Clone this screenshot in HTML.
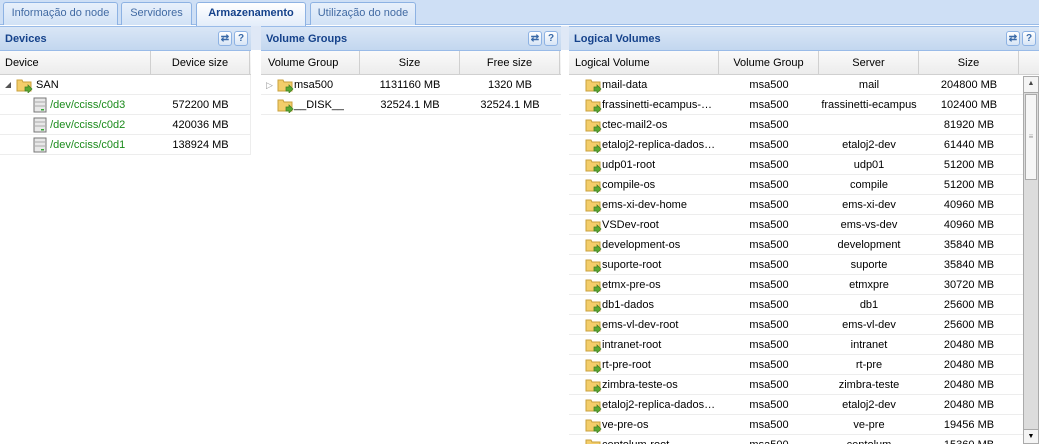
<!DOCTYPE html><html><head><style>
*{box-sizing:border-box;margin:0;padding:0}
body{width:1039px;height:444px;overflow:hidden;background:#fff;font-family:"Liberation Sans",sans-serif;font-size:11px;color:#000;position:relative}
.tabbar{position:absolute;left:0;top:0;width:1039px;height:25px;background:#cedff5;border-bottom:1px solid #99bbe8}
.tab{position:absolute;top:2px;height:23px;border:1px solid #8db2e3;border-bottom:none;border-radius:3px 3px 0 0;background:linear-gradient(#e8f0fb,#d2e2f6);color:#416aa3;font-size:11px;line-height:21px;text-align:center}
.tab.act{background:linear-gradient(#fff,#e3edfa);color:#15428b;font-weight:bold;height:24px}
.gap{position:absolute;top:26px;height:24px;background:#dfe8f6}
.panel{position:absolute;top:26px;height:418px;background:#fff;overflow:hidden}
.ph{height:25px;background:linear-gradient(#dae6f6,#c3d7ef);border-top:1px solid #99bbe8;border-bottom:1px solid #99bbe8;color:#15428b;font-weight:bold;font-size:11px;line-height:24px;padding-left:5px;position:relative}
.btns{position:absolute;right:3px;top:4px;line-height:0}
.btns span{float:left;display:block;width:14px;height:15px;border:1px solid #8db2e3;border-radius:3px;background:linear-gradient(#fff,#d7e5f6);margin-left:2px;font-size:10px;line-height:13px;text-align:center;color:#3a6aa8;font-weight:bold}
.ch{height:24px;background:linear-gradient(#fafafa,#ececec);border-bottom:1px solid #d0d0d0;position:relative}
.ch div{position:absolute;top:0;height:23px;line-height:24px;border-right:1px solid #d0d0d0;font-size:11px}
.row{height:20px;border-bottom:1px solid #ededed;position:relative}
.row div{position:absolute;top:0;line-height:20px;white-space:nowrap;overflow:hidden}
.c{text-align:center}
.g{color:#1a8a1a}
svg{vertical-align:middle}
</style></head><body>
<div class="tabbar">
<div class="tab" style="left:3px;width:115px">Informação do node</div>
<div class="tab" style="left:121px;width:71px">Servidores</div>
<div class="tab act" style="left:196px;width:110px">Armazenamento</div>
<div class="tab" style="left:310px;width:106px">Utilização do node</div>
</div>
<div class="gap" style="left:251px;width:10px"></div>
<div class="gap" style="left:561px;width:8px"></div>

<div class="panel" style="left:0;width:251px">
<div class="ph">Devices<div class="btns"><span>⇄</span><span>?</span></div></div>
<div class="ch"><div style="left:0;width:151px;padding-left:5px">Device</div><div style="left:151px;width:99px;text-align:center">Device size</div></div>
<div class="row" style="border-right:1px solid #ededed"><div style="left:5px;font-size:8px;color:#555">◢</div><div style="left:16px"><svg width="17" height="16"><path d="M1 3h5l1 2h8v9H1z" fill="#f3cd6a" stroke="#c9a13c"/><path d="M9 10h3V8l4 4-4 4v-2H9z" fill="#5aa832" stroke="#3d7f20" stroke-width=".7"/></svg> SAN</div></div>
<div class="row" style="border-right:1px solid #ededed"><div style="left:33px"><svg width="14" height="16"><rect x="1" y="1" width="12" height="14" fill="#e8e8e8" stroke="#777"/><path d="M2 5h10M2 9h10" stroke="#aaa"/><rect x="8" y="12" width="3" height="1.5" fill="#3a3"/></svg> <span class="g">/dev/cciss/c0d3</span></div><div class="c" style="left:151px;width:99px">572200 MB</div></div>
<div class="row" style="border-right:1px solid #ededed"><div style="left:33px"><svg width="14" height="16"><rect x="1" y="1" width="12" height="14" fill="#e8e8e8" stroke="#777"/><path d="M2 5h10M2 9h10" stroke="#aaa"/><rect x="8" y="12" width="3" height="1.5" fill="#3a3"/></svg> <span class="g">/dev/cciss/c0d2</span></div><div class="c" style="left:151px;width:99px">420036 MB</div></div>
<div class="row" style="border-right:1px solid #ededed"><div style="left:33px"><svg width="14" height="16"><rect x="1" y="1" width="12" height="14" fill="#e8e8e8" stroke="#777"/><path d="M2 5h10M2 9h10" stroke="#aaa"/><rect x="8" y="12" width="3" height="1.5" fill="#3a3"/></svg> <span class="g">/dev/cciss/c0d1</span></div><div class="c" style="left:151px;width:99px">138924 MB</div></div>
</div>

<div class="panel" style="left:261px;width:300px">
<div class="ph">Volume Groups<div class="btns"><span>⇄</span><span>?</span></div></div>
<div class="ch"><div style="left:0;width:99px;padding-left:7px">Volume Group</div><div style="left:99px;width:100px;text-align:center">Size</div><div style="left:199px;width:100px;text-align:center">Free size</div></div>
<div class="row"><div style="left:5px;color:#999;font-size:9px">▷</div><div style="left:16px"><svg width="17" height="16"><path d="M1 3h5l1 2h8v9H1z" fill="#f3cd6a" stroke="#c9a13c"/><path d="M9 10h3V8l4 4-4 4v-2H9z" fill="#5aa832" stroke="#3d7f20" stroke-width=".7"/></svg>msa500</div><div class="c" style="left:99px;width:100px">1131160 MB</div><div class="c" style="left:199px;width:100px">1320 MB</div></div>
<div class="row"><div style="left:16px"><svg width="17" height="16"><path d="M1 3h5l1 2h8v9H1z" fill="#f3cd6a" stroke="#c9a13c"/><path d="M9 10h3V8l4 4-4 4v-2H9z" fill="#5aa832" stroke="#3d7f20" stroke-width=".7"/></svg>__DISK__</div><div class="c" style="left:99px;width:100px">32524.1 MB</div><div class="c" style="left:199px;width:100px">32524.1 MB</div></div>
</div>

<div class="panel" style="left:569px;width:470px">
<div class="ph">Logical Volumes<div class="btns"><span>⇄</span><span>?</span></div></div>
<div class="ch"><div style="left:0;width:150px;padding-left:6px">Logical Volume</div><div style="left:150px;width:100px;text-align:center">Volume Group</div><div style="left:250px;width:100px;text-align:center">Server</div><div style="left:350px;width:100px;text-align:center">Size</div></div>
<div id="lv"></div>
<div style="position:absolute;left:454px;top:50px;width:16px;height:368px;background:#dcdcdc;border:1px solid #aaa"><div style="height:16px;background:#f4f4f4;border-bottom:1px solid #aaa;font-size:7px;text-align:center;line-height:14px;color:#444">▲</div><div style="margin:1px;height:86px;background:#f6f6f6;border:1px solid #aaa;text-align:center;line-height:84px;color:#999;font-size:8px">≡</div><div style="position:absolute;bottom:0;left:0;width:14px;height:14px;background:#f4f4f4;border-top:1px solid #aaa;font-size:7px;text-align:center;line-height:14px">▼</div></div>
</div>
<script>
var d=[["mail-data","mail","204800"],["frassinetti-ecampus-…","frassinetti-ecampus","102400"],["ctec-mail2-os","","81920"],["etaloj2-replica-dados…","etaloj2-dev","61440"],["udp01-root","udp01","51200"],["compile-os","compile","51200"],["ems-xi-dev-home","ems-xi-dev","40960"],["VSDev-root","ems-vs-dev","40960"],["development-os","development","35840"],["suporte-root","suporte","35840"],["etmx-pre-os","etmxpre","30720"],["db1-dados","db1","25600"],["ems-vl-dev-root","ems-vl-dev","25600"],["intranet-root","intranet","20480"],["rt-pre-root","rt-pre","20480"],["zimbra-teste-os","zimbra-teste","20480"],["etaloj2-replica-dados…","etaloj2-dev","20480"],["ve-pre-os","ve-pre","19456"],["centolum-root","centolum","15360"]];
var ic='<svg width="17" height="16"><path d="M1 3h5l1 2h8v9H1z" fill="#f3cd6a" stroke="#c9a13c"/><path d="M9 10h3V8l4 4-4 4v-2H9z" fill="#5aa832" stroke="#3d7f20" stroke-width=".7"/></svg>';
var h='';d.forEach(function(r){h+='<div class="row" style="width:454px"><div style="left:16px;width:132px">'+ic+r[0]+'</div><div class="c" style="left:150px;width:100px">msa500</div><div class="c" style="left:250px;width:100px">'+r[1]+'</div><div class="c" style="left:350px;width:100px">'+r[2]+' MB</div></div>'});
document.getElementById('lv').innerHTML=h;
</script>
</body></html>
